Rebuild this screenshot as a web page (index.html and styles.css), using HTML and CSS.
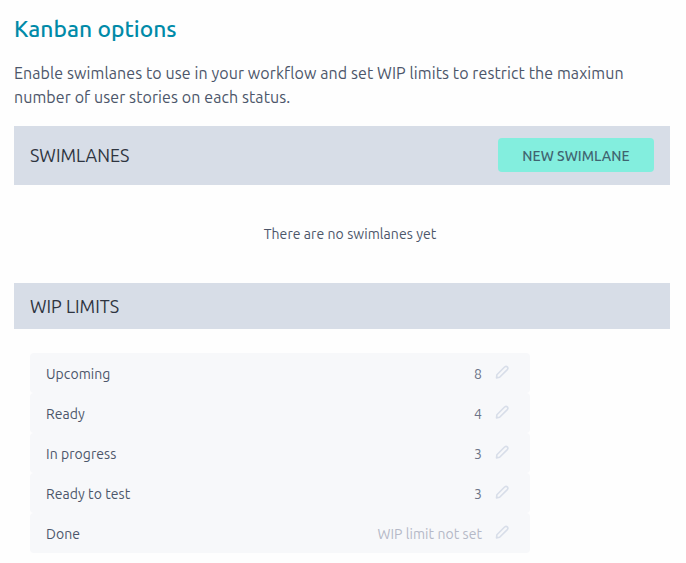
FILE: index.html
```html
<!DOCTYPE html>
<html lang="en">
<head>
<meta charset="utf-8">
<title>Kanban options</title>
<link rel="stylesheet" href="styles.css">
</head>
<body>
<svg class="sprite" aria-hidden="true">
  <symbol id="pencil" viewBox="0 0 14 14">
    <path d="M1.5 12.9 L1.9 9.7 L9.6 2 Q11.1 .7 12.3 1.9 Q13.5 3.2 12.3 4.6 L4.6 12.3 Z" fill="none" stroke="currentColor" stroke-width="1.6" stroke-linejoin="round"/>
  </symbol>
</svg>
<main class="page">
  <h1 class="title">Kanban options</h1>
  <p class="intro">Enable swimlanes to use in your workflow and set WIP limits to restrict the maximun<br>number of user stories on each status.</p>
  <section>
    <header class="bar bar-swimlanes">
      <h2 class="bar-title">SWIMLANES</h2>
      <button class="button" type="button">NEW SWIMLANE</button>
    </header>
    <p class="empty">There are no swimlanes yet</p>
  </section>
  <section>
    <header class="bar bar-wip"><h2 class="bar-title">WIP LIMITS</h2></header>
    <ul class="limits">
      <li class="limit"><span class="name">Upcoming</span><span class="value">8</span><svg class="edit"><use href="#pencil"/></svg></li>
      <li class="limit"><span class="name">Ready</span><span class="value">4</span><svg class="edit"><use href="#pencil"/></svg></li>
      <li class="limit"><span class="name">In progress</span><span class="value">3</span><svg class="edit"><use href="#pencil"/></svg></li>
      <li class="limit"><span class="name">Ready to test</span><span class="value">3</span><svg class="edit"><use href="#pencil"/></svg></li>
      <li class="limit"><span class="name">Done</span><span class="value unset">WIP limit not set</span><svg class="edit"><use href="#pencil"/></svg></li>
    </ul>
  </section>
</main>
</body>
</html>
```
FILE: styles.css
```css
* { box-sizing: border-box; margin: 0; padding: 0; }
body {
  background: #fefefe;
  color: #4c566a;
  font-family: Ubuntu, "Noto Sans", sans-serif;
  font-size: 14px;
}
.sprite { display: none; }
.page { padding: 13px 16px 0 14px; }
.title {
  color: #008aa8;
  font-size: 22.8px;
  font-weight: 500;
  line-height: 32px;
}
.intro {
  margin-top: 16px;
  font-size: 16px;
  line-height: 24px;
  letter-spacing: .09px;
  white-space: nowrap;
}
.bar {
  display: flex;
  align-items: center;
  justify-content: space-between;
  padding: 0 16px;
  background: #d7dde7;
}
.bar-swimlanes { height: 59px; margin-top: 17px; padding-bottom: 1px; }
.bar-wip { height: 46px; }
.bar-title {
  color: #2e3440;
  font-size: 17.9px;
  font-weight: 400;
  line-height: 24px;
}
.button {
  width: 156px;
  height: 34px;
  padding-top: 2px;
  border: 0;
  border-radius: 4px;
  background: #83eede;
  color: #3f6470;
  font: 500 14px/32px Ubuntu, "Noto Sans", sans-serif;
  letter-spacing: .05px;
  white-space: nowrap;
}
.empty {
  height: 98px;
  line-height: 98px;
  text-align: center;
  letter-spacing: .07px;
  padding-left: 16px;
}
.limits { width: 500px; margin: 24px 0 0 16px; list-style: none; }
.limit {
  display: flex;
  align-items: center;
  height: 40px;
  padding: 2px 21px 0 16px;
  border-radius: 4px;
  background: #f7f8fa;
  letter-spacing: .06px;
}
.name { flex: 1; }
.value { color: #6d7488; }
.unset { color: #b5b9c7; }
.edit { width: 14px; height: 14px; margin: -4px 0 0 13px; color: #d8dee9; }
```
